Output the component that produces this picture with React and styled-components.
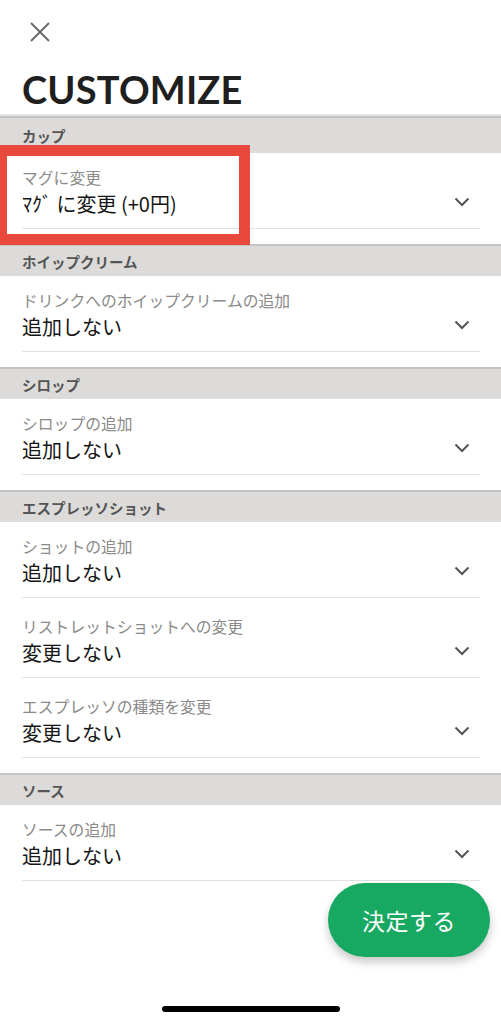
import styled, { createGlobalStyle } from "styled-components";

const Global = createGlobalStyle`
  html, body {
    margin: 0;
    padding: 0;
    background: #fff;
  }
  body {
    width: 501px;
    height: 1024px;
    overflow: hidden;
    font-family: "Noto Sans CJK JP", "Noto Sans", sans-serif;
  }
`;

const Screen = styled.div`
  position: relative;
  width: 501px;
  height: 1024px;
  overflow: hidden;
  background: #fff;
`;

const TopBar = styled.div`
  height: 116px;
  padding: 0 22px;
  box-sizing: border-box;
  border-bottom: 2px solid #e6e6e6;
  display: flex;
  flex-direction: column;
`;

const CloseBtn = styled.div`
  width: 40px;
  height: 40px;
  margin: 12px 0 0 -2px;
  display: flex;
  align-items: center;
  justify-content: center;
`;

const Title = styled.h1`
  margin: 15px 0 0;
  font-family: Lato, "Liberation Sans", sans-serif;
  font-weight: 700;
  font-size: 38px;
  line-height: 44px;
  letter-spacing: 0.2px;
  color: #1f1f1f;
`;

const Section = styled.section`
  padding-bottom: 15px;
`;

const SectionHead = styled.div`
  height: ${(p) => (p.$tall ? "35px" : "30px")};
  border-top: 2px solid #c4c3c1;
  background: #dcdbd9;
  padding: 0 22px;
  display: flex;
  align-items: center;
  font-size: 14.5px;
  font-weight: 700;
  color: #555;
`;

const Items = styled.div`
  display: flex;
  flex-direction: column;
  gap: 4px;
  padding: 0 21px 0 22px;
`;

const Item = styled.div`
  display: flex;
  align-items: center;
  padding: 12px 0 11px;
  border-bottom: 1px solid #e2e2e2;
`;

const ItemText = styled.div`
  flex: 1;
  display: flex;
  flex-direction: column;
`;

const Label = styled.div`
  font-size: 15.8px;
  line-height: 26px;
  color: #8a8a8a;
`;

const Value = styled.div`
  font-size: 20px;
  line-height: 26px;
  color: #151515;
`;

const Chevron = styled.svg`
  width: 16px;
  height: 10px;
  margin: 22px 10px 0 0;
`;

const Highlight = styled.div`
  position: absolute;
  left: -4px;
  top: 145px;
  width: 254px;
  height: 100px;
  box-sizing: border-box;
  border: 11px solid #e8493c;
`;

const ConfirmBtn = styled.button`
  position: absolute;
  left: 328px;
  top: 883px;
  width: 162px;
  height: 74px;
  border: none;
  border-radius: 37px;
  background: #17a862;
  color: #fff;
  font-family: "Noto Sans CJK JP", sans-serif;
  font-size: 23px;
  letter-spacing: 0.5px;
  box-shadow: 0 5px 10px rgba(0, 0, 0, 0.22);
`;

const HomeBar = styled.div`
  position: absolute;
  left: 162px;
  top: 1006px;
  width: 178px;
  height: 6px;
  border-radius: 3px;
  background: #000;
`;

const sections = [
  { title: "カップ", items: [["マグに変更", "ﾏｸﾞ に変更 (+0円)"]] },
  { title: "ホイップクリーム", items: [["ドリンクへのホイップクリームの追加", "追加しない"]] },
  { title: "シロップ", items: [["シロップの追加", "追加しない"]] },
  {
    title: "エスプレッソショット",
    items: [
      ["ショットの追加", "追加しない"],
      ["リストレットショットへの変更", "変更しない"],
      ["エスプレッソの種類を変更", "変更しない"],
    ],
  },
  { title: "ソース", items: [["ソースの追加", "追加しない"]] },
];

export default function App() {
  return (
    <Screen>
      <Global />
      <TopBar>
        <CloseBtn>
          <svg width="20" height="20" viewBox="0 0 20 20">
            <path d="M1 1L19 19M19 1L1 19" stroke="#666" strokeWidth="1.8" />
          </svg>
        </CloseBtn>
        <Title>CUSTOMIZE</Title>
      </TopBar>
      {sections.map((s, i) => (
        <Section key={s.title}>
          <SectionHead $tall={i === 0}>{s.title}</SectionHead>
          <Items>
            {s.items.map(([label, value]) => (
              <Item key={label}>
                <ItemText>
                  <Label>{label}</Label>
                  <Value>{value}</Value>
                </ItemText>
                <Chevron viewBox="0 0 16 10">
                  <path d="M1.5 1.5L8 8L14.5 1.5" fill="none" stroke="#555" strokeWidth="2" />
                </Chevron>
              </Item>
            ))}
          </Items>
        </Section>
      ))}
      <Highlight />
      <ConfirmBtn>決定する</ConfirmBtn>
      <HomeBar />
    </Screen>
  );
}
